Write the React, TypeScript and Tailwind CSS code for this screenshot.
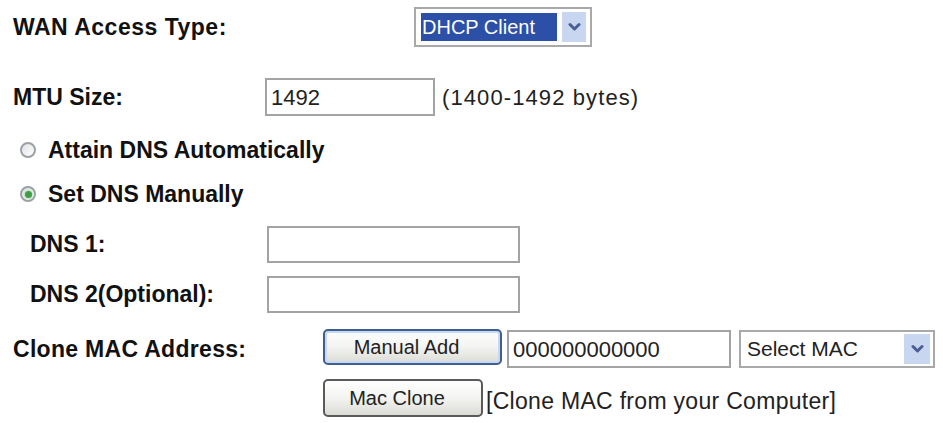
import type { ReactNode } from "react";

function Chevron() {
  return (
    <svg width="13" height="10" viewBox="0 0 13 10">
      <polyline points="2,2.5 6.5,7 11,2.5" fill="none" stroke="#4b5f94" strokeWidth="3" strokeLinecap="round" strokeLinejoin="round" />
    </svg>
  );
}

function Radio({ checked }: { checked?: boolean }) {
  return (
    <span className="w-[16px] h-[16px] rounded-full border-2 border-[#9ba1a7] bg-gradient-to-br from-[#dfe2e5] to-white flex items-center justify-center shrink-0">
      {checked && <span className="w-[7px] h-[7px] rounded-full bg-[#3f9e45] shadow-[0_0_2px_1px_#b3e0b5]" />}
    </span>
  );
}

function TextBox({ value = "", className = "" }: { value?: string; className?: string }) {
  return (
    <div className={`border-2 border-[#a3a3a3] bg-white flex items-center pl-[4px] text-[22px] text-[#222] ${className}`}>
      {value}
    </div>
  );
}

function XpButton({ children, focused, className = "" }: { children: ReactNode; focused?: boolean; className?: string }) {
  return (
    <div
      className={`rounded-[5px] flex items-center justify-center pr-[12px] text-[20px] text-[#222] bg-gradient-to-b from-white via-[#f3f3f1] to-[#dcdcd6] ${
        focused ? "border-2 border-[#3f5f93] shadow-[inset_0_0_0_2px_#c9d8f2]" : "border-2 border-[#5a5a5a]"
      } ${className}`}
    >
      {children}
    </div>
  );
}

export default function App() {
  return (
    <div className="w-[943px] h-[423px] bg-white pl-[13px] pt-[7px] font-['Liberation_Sans',Arial,sans-serif] text-[#111] overflow-hidden">
      {/* WAN access type */}
      <div className="flex items-center h-[40px]">
        <div className="w-[401px] text-[23px] font-bold tracking-[0.5px]">WAN Access Type:</div>
        <div className="w-[178px] h-[40px] border-2 border-[#a9a9a9] bg-white flex items-center pl-[5px] pr-[4px]">
          <div className="w-[136px] h-[28px] bg-[#2c50a7] text-white text-[20px] flex items-center pl-[1px]">DHCP Client</div>
          <div className="ml-auto w-[24px] h-[30px] bg-[#c9d6f0] flex items-center justify-center">
            <Chevron />
          </div>
        </div>
      </div>

      {/* MTU */}
      <div className="flex items-center h-[38px] mt-[31px]">
        <div className="w-[252px] text-[23px] font-bold">MTU Size:</div>
        <TextBox value="1492" className="w-[170px] h-[38px]" />
        <div className="ml-[7px] text-[22px] tracking-[1.1px] text-[#222]">(1400-1492 bytes)</div>
      </div>

      {/* DNS mode */}
      <div className="flex items-center h-[24px] mt-[22px] pl-[7px] gap-[12px]">
        <Radio />
        <div className="text-[23px] font-bold">Attain DNS Automatically</div>
      </div>
      <div className="flex items-center h-[24px] mt-[20px] pl-[7px] gap-[12px]">
        <Radio checked />
        <div className="text-[23px] font-bold">Set DNS Manually</div>
      </div>

      {/* DNS servers */}
      <div className="flex items-center h-[37px] mt-[20px] pl-[17px]">
        <div className="w-[237px] text-[23px] font-bold">DNS 1:</div>
        <TextBox className="w-[253px] h-[37px]" />
      </div>
      <div className="flex items-center h-[37px] mt-[13px] pl-[17px]">
        <div className="w-[237px] text-[23px] font-bold">DNS 2(Optional):</div>
        <TextBox className="w-[253px] h-[37px]" />
      </div>

      {/* Clone MAC */}
      <div className="flex items-center h-[40px] mt-[16px]">
        <div className="w-[310px] text-[23px] font-bold tracking-[0.3px]">Clone MAC Address:</div>
        <XpButton focused className="w-[179px] h-[36px] -mt-[5px]">Manual Add</XpButton>
        <TextBox value="000000000000" className="w-[224px] h-[38px] ml-[5px]" />
        <div className="ml-[8px] w-[196px] h-[38px] border-2 border-[#a9a9a9] bg-white flex items-center pl-[6px] pr-[3px]">
          <span className="text-[21px] text-[#222]">Select MAC</span>
          <div className="ml-auto w-[26px] h-[30px] bg-[#c9d6f0] flex items-center justify-center">
            <Chevron />
          </div>
        </div>
      </div>
      <div className="flex items-center h-[38px] mt-[10px] pl-[310px]">
        <XpButton className="w-[160px] h-[38px]">Mac Clone</XpButton>
        <div className="ml-[3px] mt-[6px] text-[23px] text-[#222] tracking-[0.3px]">[Clone MAC from your Computer]</div>
      </div>
    </div>
  );
}
